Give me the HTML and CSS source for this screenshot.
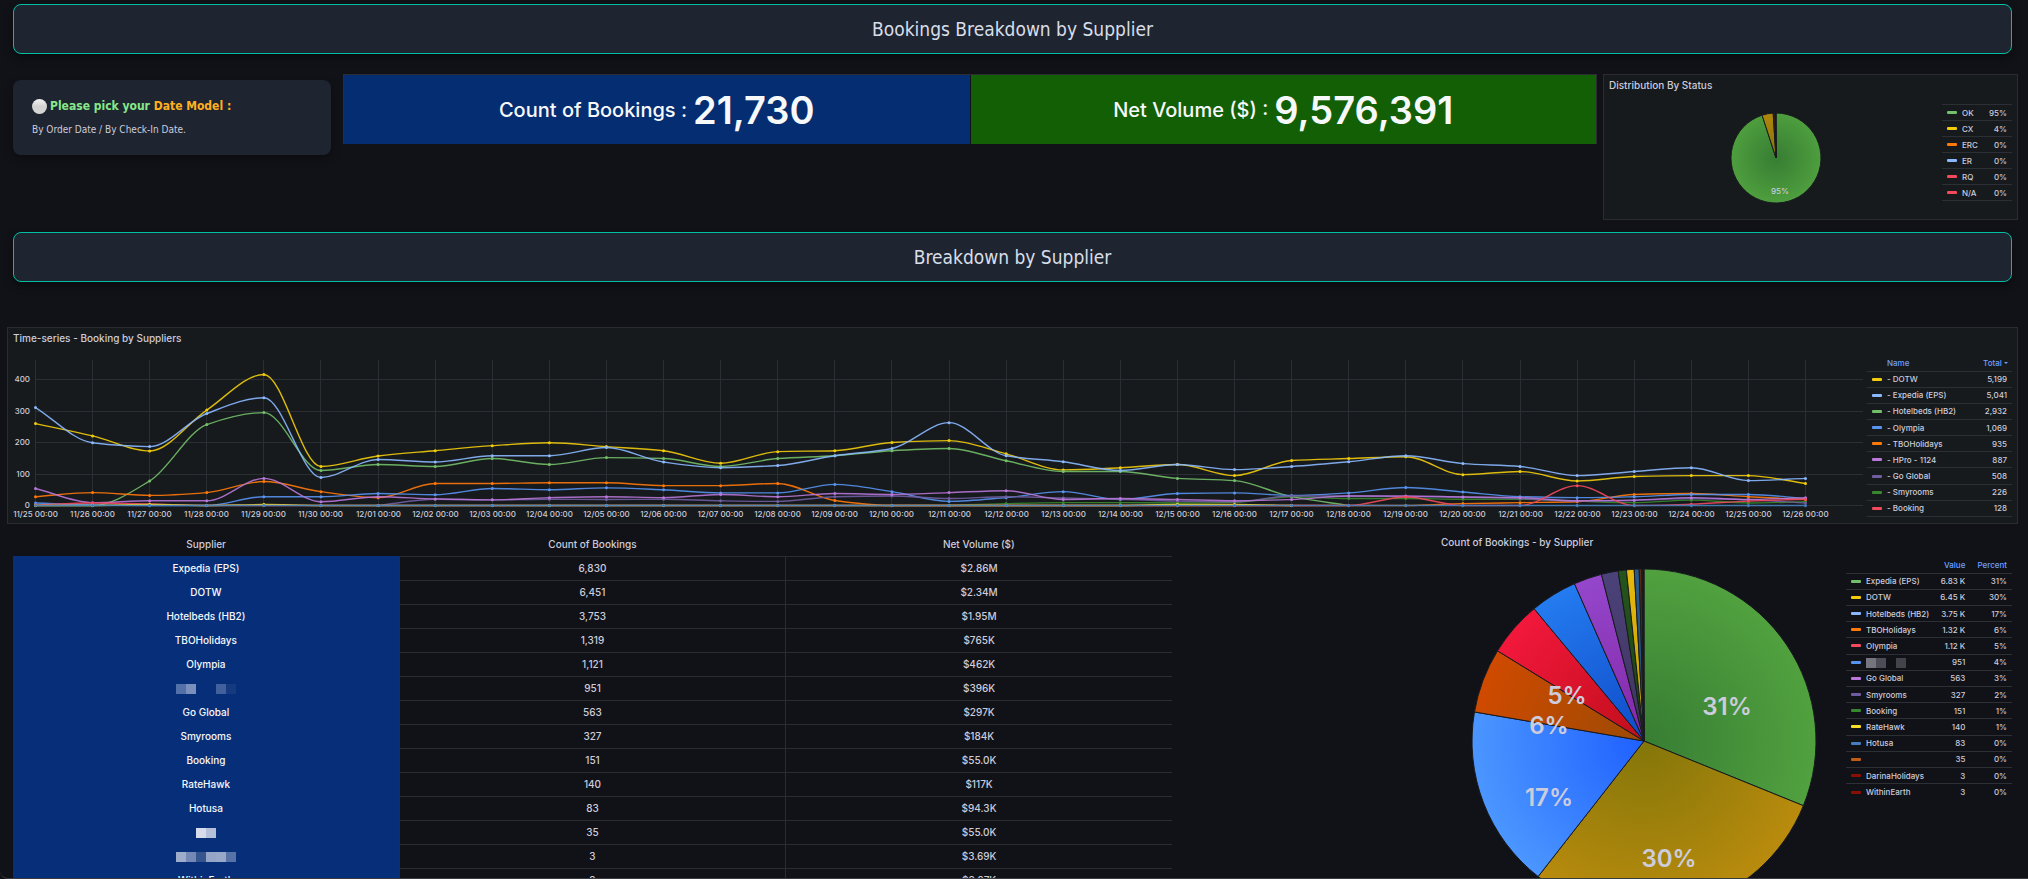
FILE: index.html
```html
<!DOCTYPE html>
<html lang="en">
<head>
    <meta charset="UTF-8">
    <meta name="viewport" content="width=device-width, initial-scale=1.0">
    <title>Bookings Breakdown by Supplier</title>
    <link rel="stylesheet" href="styles.css">
</head>
<body>
    <main class="dashboard">
        <h1 class="banner">Bookings Breakdown by Supplier</h1>

        <section class="summary">
            <div class="card">
                <p class="card-title"><span class="dot"></span><span class="pick">Please pick your <span class="model">Date Model :</span></span></p>
                <p class="card-text">By Order Date / By Check-In Date.</p>
            </div>

            <div class="stats">
                <div class="stat stat-blue"><span class="stat-label">Count of Bookings :</span><span class="stat-value">21,730</span></div>
                <div class="stat stat-green"><span class="stat-label">Net Volume ($) :</span><span class="stat-value">9,576,391</span></div>
            </div>

            <div class="panel status-panel">
                <h2 class="panel-title">Distribution By Status</h2>
                <div class="status-body">
                    <svg class="pie small-pie" id="statusPie" viewBox="-46 -46 92 92"></svg>
                    <table class="legend status-legend">
                        <tbody id="statusLegend"></tbody>
                    </table>
                </div>
            </div>
        </section>

        <h1 class="banner">Breakdown by Supplier</h1>

        <section class="panel series-panel">
            <div class="series-main">
                <h2 class="panel-title">Time-series - Booking by Suppliers</h2>
                <svg class="chart" id="chart"></svg>
            </div>
            <table class="legend series-legend">
                <thead>
                    <tr><th></th><th class="name">Name</th><th class="num">Total <span class="caret"></span></th></tr>
                </thead>
                <tbody id="seriesLegend"></tbody>
            </table>
        </section>

        <section class="bottom">
            <table class="data-table">
                <thead>
                    <tr><th>Supplier</th><th>Count of Bookings</th><th>Net Volume ($)</th></tr>
                </thead>
                <tbody id="supplierRows"></tbody>
            </table>

            <div class="pie-panel">
                <h2 class="panel-title">Count of Bookings - by Supplier</h2>
                <div class="pie-body">
                    <svg class="pie big-pie" id="supplierPie" viewBox="-173 -173 346 346"></svg>
                    <table class="legend pie-legend">
                        <thead>
                            <tr><th></th><th></th><th class="num">Value</th><th class="num">Percent</th></tr>
                        </thead>
                        <tbody id="pieLegend"></tbody>
                    </table>
                </div>
            </div>
        </section>
    </main>

    <script src="script.js"></script>
</body>
</html>
```

FILE: styles.css
```css
* {
    box-sizing: border-box;
}

body {
    margin: 0;
    background: #111217;
    color: #ccccdc;
    font-family: Inter, "Liberation Sans", sans-serif;
    font-size: 10px;
}

h1, h2, p {
    margin: 0;
}

.dashboard {
    height: 100vh;
    overflow: hidden;
    padding: 4px 10px 0 7px;
    border-bottom: 1px solid #3a3b40;
    border-bottom-left-radius: 8px;
}

.banner {
    height: 50px;
    margin: 0 6px;
    display: flex;
    align-items: center;
    justify-content: center;
    background: #1f2530;
    border: 1px solid #00bfa5;
    border-radius: 8px;
    box-shadow: 0 4px 8px rgba(0, 0, 0, 0.4);
    color: #d8dee9;
    font-family: "DejaVu Sans Condensed", "Noto Sans", sans-serif;
    font-size: 19px;
    font-weight: 400;
}

.summary {
    display: grid;
    grid-template-columns: 330px 1fr 415px;
    align-items: start;
    gap: 6px;
    margin: 20px 0 12px;
}

/* Date model card */
.card {
    height: 75px;
    margin: 6px 6px 0;
    padding: 16px 19px;
    background: #1f2530;
    border-radius: 8px;
    box-shadow: 0 4px 8px rgba(0, 0, 0, 0.3);
    font-family: "DejaVu Sans Condensed", "Noto Sans", sans-serif;
}

.card-title {
    display: flex;
    align-items: center;
    gap: 3px;
    height: 20px;
    font-size: 12px;
    font-weight: 700;
}

.dot {
    width: 15px;
    height: 15px;
    border-radius: 50%;
    background: linear-gradient(#f4f4f4, #d2d2d2 50%, #d6d6d6);
}

.pick {
    color: #86e88a;
}

.model {
    color: #ffb020;
}

.card-text {
    margin-top: 4px;
    font-size: 10px;
    line-height: 20px;
}

/* Totals */
.stats {
    display: grid;
    grid-template-columns: 1fr 1fr;
    gap: 1px;
    border: 1px solid #2b2d33;
    border-bottom: 0;
}

.stat {
    display: flex;
    align-items: center;
    justify-content: center;
    gap: 6px;
    height: 69px;
    color: #f7f8fa;
    font-weight: 500;
}

.stat-blue {
    background: #052d72;
}

.stat-green {
    background: #125f06;
}

.stat-label {
    font-size: 20px;
}

.stat-value {
    font-size: 38px;
    font-weight: 600;
}

/* Panels */
.panel {
    background: #171a1d;
    border: 1px solid #292b30;
}

.panel-title {
    padding: 0 5px;
    font-size: 10px;
    font-weight: 500;
    line-height: 20px;
}

.status-panel {
    height: 146px;
}

.status-body {
    display: flex;
    align-items: flex-start;
    padding: 9px 5px 0;
}

.pie {
    display: block;
    margin: 0 auto;
}

.small-pie {
    width: 92px;
    height: 92px;
    margin-top: 8px;
}

.pie text {
    fill: #ccccdc;
    text-anchor: middle;
    dominant-baseline: central;
}

.small-pie text {
    font-size: 8px;
    font-weight: 500;
}

.big-pie text {
    font-size: 24px;
    font-weight: 600;
}

/* Legends */
.legend {
    border-collapse: collapse;
    font-size: 8px;
    font-weight: 500;
    line-height: 12px;
    flex: none;
}

.legend td,
.legend th {
    height: 16px;
    padding: 0 5px 0 0;
    text-align: left;
    font-weight: 500;
    white-space: nowrap;
}

.legend th {
    color: #6e9fff;
}

.legend td {
    border-top: 1px solid #2c2f33;
}

.legend .num {
    text-align: right;
}

.legend .key {
    width: 20px;
    padding-left: 5px;
}

.swatch {
    display: block;
    width: 10px;
    height: 3px;
    border-radius: 1px;
}

.status-legend {
    width: 70px;
    border-bottom: 1px solid #2c2f33;
}

.series-legend {
    width: 145px;
    height: 162px;
    margin-top: 27px;
    align-self: flex-start;
    border-bottom: 1px solid #2c2f33;
}

.series-legend th.num {
    padding-right: 4px;
}

.pie-legend {
    width: 166px;
    height: 243px;
}

.pie-legend .num:nth-child(3) {
    padding-right: 10px;
}

.caret {
    display: inline-block;
    margin-bottom: 2px;
    border: 2px solid transparent;
    border-top-color: #6e9fff;
    border-bottom: 0;
}

/* Time series */
.series-panel {
    display: flex;
    gap: 4px;
    height: 197px;
    margin-top: 45px;
    padding-right: 5px;
}

.series-main {
    flex: 1;
    min-width: 0;
}

.chart {
    display: block;
    width: 100%;
    height: 175px;
}

.chart text {
    fill: #ccccdc;
    font-size: 8px;
    font-weight: 500;
}

.chart .grid {
    stroke: #2b2e32;
    stroke-width: 1;
}

.chart .line {
    fill: none;
    stroke-width: 1.4;
    opacity: 0.9;
}

/* Supplier table and pie */
.bottom {
    display: grid;
    grid-template-columns: 1159fr 582fr;
    gap: 264px;
    align-items: start;
    padding-left: 6px;
}

.data-table {
    width: 100%;
    margin-top: 8px;
    border-collapse: collapse;
    table-layout: fixed;
    line-height: 14px;
}

.data-table th,
.data-table td {
    height: 24px;
    padding: 0;
    text-align: center;
    font-weight: 500;
}

.data-table td {
    border-top: 1px solid #2a2c31;
}

.data-table td + td {
    border-left: 1px solid #2a2c31;
}

.data-table td:first-child {
    background: #072f79;
    border-color: #072f79;
    color: #f7f8fa;
}

.mask {
    display: inline-block;
    height: 10px;
    vertical-align: middle;
}

.mask i {
    float: left;
    width: 10px;
    height: 100%;
}

.pie-panel {
    padding-top: 8px;
}

.pie-body {
    display: flex;
    align-items: flex-start;
    padding: 5px 6px 0 5px;
}

.big-pie {
    width: 346px;
    height: 346px;
    margin-top: 11px;
}
```

FILE: script.js
```javascript
const suppliers = [
    // name, bookings, volume, value label, percent, swatch, pie centre, pie edge
    ["Expedia (EPS)", 6830, "$2.86M", "6.83 K", 31, "#73bf69", "#377d33", "#51a13f"],
    ["DOTW", 6451, "$2.34M", "6.45 K", 30, "#f2cc0c", "#83760a", "#b98b0d"],
    ["Hotelbeds (HB2)", 3753, "$1.95M", "3.75 K", 17, "#8ab8ff", "#1f60ff", "#4b96ff"],
    ["TBOHolidays", 1319, "$765K", "1.32 K", 6, "#ff780a", "#9c4a04", "#cf4a00"],
    ["Olympia", 1121, "$462K", "1.12 K", 5, "#f2495c", "#c00e1a", "#f2183c"],
    [["#5470a8", "#7a8fbb", "", "", "#42609c", "#153a80"], 951, "$396K", "951", 4, "#5794f2", "#0f4bc8", "#247bf0"],
    ["Go Global", 563, "$297K", "563", 3, "#b877d9", "#8427a8", "#9447cb"],
    ["Smyrooms", 327, "$184K", "327", 2, "#705da0", "#3f335e", "#4b4279"],
    ["Booking", 151, "$55.0K", "151", 1, "#37872d", "#1c4416", "#25541c"],
    ["RateHawk", 140, "$117K", "140", 1, "#fade2a", "#b89b0a", "#e9b90c"],
    ["Hotusa", 83, "$94.3K", "83", 0, "#447ebc", "#254a72", "#285a8c"],
    [["#d6dcea", "#b4c0d9"], 35, "$55.0K", "35", 0, "#c15c17", "#4e2810", "#5c2a12"],
    [["#9dacca", "#7388b5", "#35558f", "#94a5c7", "#98a8c8", "#5772a6"], 3, "$3.69K", "3", 0, "#890f02", "#400a05", "#400a05"],
    ["WithinEarth", 3, "$3.27K", "3", 0, "#890f02", "#400a05", "#400a05"]
];

// names shown in the pie legend where they differ from the table
const pieNames = { 5: ["#74757e", "#4c4d56", "", "#42434b"], 11: "", 12: "DarinaHolidays" };

const statuses = [
    ["OK", "95%", "#73bf69", 95, "#377d33", "#4e9e3e"],
    ["CX", "4%", "#f2cc0c", 4, "#83760a", "#b0860d"],
    ["ERC", "0%", "#ff780a", 0.6, "#5a2c0c", "#7a3208"],
    ["ER", "0%", "#8ab8ff", 0.2, "#1d2b44", "#1d2b44"],
    ["RQ", "0%", "#f2495c", 0.1, "#40151c", "#40151c"],
    ["N/A", "0%", "#f2495c", 0.1, "#40151c", "#40151c"]
];

const series = [
    ["- Smyrooms", "226", "#37872d", [,,,,,,,,,,,,,,,, 0, 6, 9, 9, 8, 10, 28, 22, 22, 20, 20, 14, 9, 17, 8, 12]],
    ["- DOTW", "5,199", "#f2cc0c", [260, 221, 173, 303, 416, 124, 157, 174, 190, 199, 187, 174, 134, 171, 174, 200, 206, 164, 113, 120, 130, 95, 143, 149, 155, 98, 108, 78, 92, 95, 95, 70]],
    ["- Hotelbeds (HB2)", "2,932", "#73bf69", [0, 0, 78, 257, 295, 111, 130, 124, 149, 130, 152, 149, 124, 149, 158, 174, 181, 142, 108, 108, 86, 79, 28, 0]],
    ["- Expedia (EPS)", "5,041", "#8ab8ff", [311, 199, 187, 292, 342, 89, 146, 138, 158, 158, 184, 138, 120, 127, 158, 181, 263, 158, 139, 111, 130, 114, 124, 139, 158, 133, 124, 95, 108, 120, 79, 86]],
    ["- TBOHolidays", "935", "#ff780a", [28, 41, 32, 41, 76, 44, 25, 70, 70, 72, 72, 63, 63, 70, 16, 0, 0, 0, 0, 0, 0, 0, 0, 0, 0, 6, 9, 12, 35, 38, 28, 19]],
    ["- Olympia", "1,069", "#5794f2", [8, 2, 0, 0, 28, 28, 38, 34, 54, 50, 56, 50, 40, 40, 67, 44, 13, 25, 44, 19, 38, 40, 32, 40, 57, 43, 28, 25, 28, 35, 35, 22]],
    ["- Go Global", "508", "#705da0", [,,,,,, 0, 20, 18, 20, 19, 20, 15, 13, 28, 30, 22, 28, 24, 20, 14, 12, 30, 30, 28, 27, 22, 14, 16, 22, 18, 8]],
    ["- HPro - 1124", "887", "#b877d9", [54, 9, 15, 15, 86, 12, 28, 21, 18, 25, 28, 25, 35, 28, 38, 35, 41, 47, 19, 22, 19, 15, 19, 30, 30, 27, 25, 15, 17, 25, 19, 25]],
    ["- Booking", "128", "#f2495c", [2, 8, 5, 0, 0, 0, 0, 0, 0, 0, 0, 0, 0, 0, 0, 0, 0, 0, 0, 0, 0, 0, 0, 0, 27, 0, 0, 63, 0, 4, 14, 20]],
    ["", "", "#fade2a", [0, 0, 3, 0, 3, 0, 0, 0, 0, 0, 0, 0, 0, 0, 0, 0, 0, 0, 0, 0, 3, 3, 0]],
    ["", "", "#447ebc", new Array(32).fill(0)]
];

const seriesOrder = [1, 3, 2, 5, 4, 7, 6, 0, 8];

function swatch(color) {
    return `<td class="key"><span class="swatch" style="background:${color}"></span></td>`;
}

function label(name) {
    if (typeof name === "string") return name;
    return '<span class="mask">' + name.map(c => `<i style="background:${c || "transparent"}"></i>`).join("") + "</span>";
}

// pad keeps the tiny slices visible
function drawPie(id, slices, radius, pad, labels) {
    const total = slices.reduce((sum, s) => sum + s.value + pad, 0);
    let angle = 0;
    let defs = "";
    let paths = "";
    slices.forEach((s, i) => {
        const end = angle + (s.value + pad) / total * Math.PI * 2;
        const large = end - angle > Math.PI ? 1 : 0;
        const point = a => `${(Math.sin(a) * radius).toFixed(2)} ${(-Math.cos(a) * radius).toFixed(2)}`;
        defs += `<radialGradient id="${id}${i}" gradientUnits="userSpaceOnUse" cx="0" cy="0" r="${radius}"><stop offset="0" stop-color="${s.inner}"/><stop offset="1" stop-color="${s.outer}"/></radialGradient>`;
        paths += `<path d="M0 0L${point(angle)}A${radius} ${radius} 0 ${large} 1 ${point(end)}Z" fill="url(#${id}${i})" stroke="#181b1f"/>`;
        angle = end;
    });
    const texts = labels.map(l => `<text x="${l[1]}" y="${l[2]}">${l[0]}</text>`).join("");
    document.getElementById(id).innerHTML = `<defs>${defs}</defs>${paths}${texts}`;
}

// Monotone cubic curve through the points
function smoothPath(pts) {
    const n = pts.length;
    const slope = [];
    for (let i = 0; i < n - 1; i++) {
        slope.push((pts[i + 1][1] - pts[i][1]) / (pts[i + 1][0] - pts[i][0]));
    }
    const m = pts.map((p, i) => {
        if (i === 0) return slope[0];
        if (i === n - 1) return slope[n - 2];
        const a = slope[i - 1];
        const b = slope[i];
        return a * b <= 0 ? 0 : 2 * a * b / (a + b);
    });
    let d = `M${pts[0][0]} ${pts[0][1]}`;
    for (let i = 0; i < n - 1; i++) {
        const h = (pts[i + 1][0] - pts[i][0]) / 3;
        d += `C${pts[i][0] + h} ${pts[i][1] + m[i] * h} ${pts[i + 1][0] - h} ${pts[i + 1][1] - m[i + 1] * h} ${pts[i + 1][0]} ${pts[i + 1][1]}`;
    }
    return d;
}

function drawChart() {
    const svg = document.getElementById("chart");
    const width = svg.clientWidth;
    const left = 27;
    const step = (width - left - 58) / 31;
    const top = 12;
    const zero = 157;
    const unit = 0.315;
    let out = "";

    for (let v = 0; v <= 400; v += 100) {
        const y = Math.round(zero - v * unit) + 0.5;
        out += `<line class="grid" x1="${left}" x2="${width}" y1="${y}" y2="${y}"/>`;
        out += `<text x="${left - 5}" y="${y + 2}" text-anchor="end">${v}</text>`;
    }
    for (let i = 0; i < 32; i++) {
        const x = Math.round(left + i * step) + 0.5;
        const date = new Date(2023, 10, 25 + i);
        const text = `${date.getMonth() + 1}/${String(date.getDate()).padStart(2, "0")} 00:00`;
        out += `<line class="grid" x1="${x}" x2="${x}" y1="${top}" y2="${zero + 3}"/>`;
        out += `<text x="${x}" y="169" text-anchor="middle">${text}</text>`;
    }
    series.forEach(([, , color, values]) => {
        const pts = [];
        values.forEach((v, i) => pts.push([left + 0.5 + i * step, zero + 0.5 - v * unit]));
        out += `<path class="line" stroke="${color}" d="${smoothPath(pts)}"/>`;
        pts.forEach(p => {
            out += `<circle cx="${p[0]}" cy="${p[1]}" r="1.5" fill="${color}"/>`;
        });
    });
    svg.innerHTML = out;
}

document.getElementById("statusLegend").innerHTML = statuses.map(s =>
    `<tr>${swatch(s[2])}<td>${s[0]}</td><td class="num">${s[1]}</td></tr>`).join("");

document.getElementById("seriesLegend").innerHTML = seriesOrder.map(i =>
    `<tr>${swatch(series[i][2])}<td>${series[i][0]}</td><td class="num">${series[i][1]}</td></tr>`).join("");

document.getElementById("supplierRows").innerHTML = suppliers.map(s =>
    `<tr><td>${label(s[0])}</td><td>${s[1].toLocaleString("en-US")}</td><td>${s[2]}</td></tr>`).join("");

document.getElementById("pieLegend").innerHTML = suppliers.map((s, i) =>
    `<tr>${swatch(s[5])}<td>${label(i in pieNames ? pieNames[i] : s[0])}</td><td class="num">${s[3]}</td><td class="num">${s[4]}%</td></tr>`).join("");

drawPie("statusPie", statuses.map(s => ({ value: s[3], inner: s[4], outer: s[5] })), 45, 0, [["95%", 4, 33]]);
drawPie("supplierPie", suppliers.map(s => ({ value: s[1], inner: s[6], outer: s[7] })), 172, 19,
    [["31%", 83, -35], ["30%", 25, 117], ["17%", -95, 56], ["6%", -95, -16], ["5%", -77, -46]]);

drawChart();
window.addEventListener("resize", drawChart);
```
